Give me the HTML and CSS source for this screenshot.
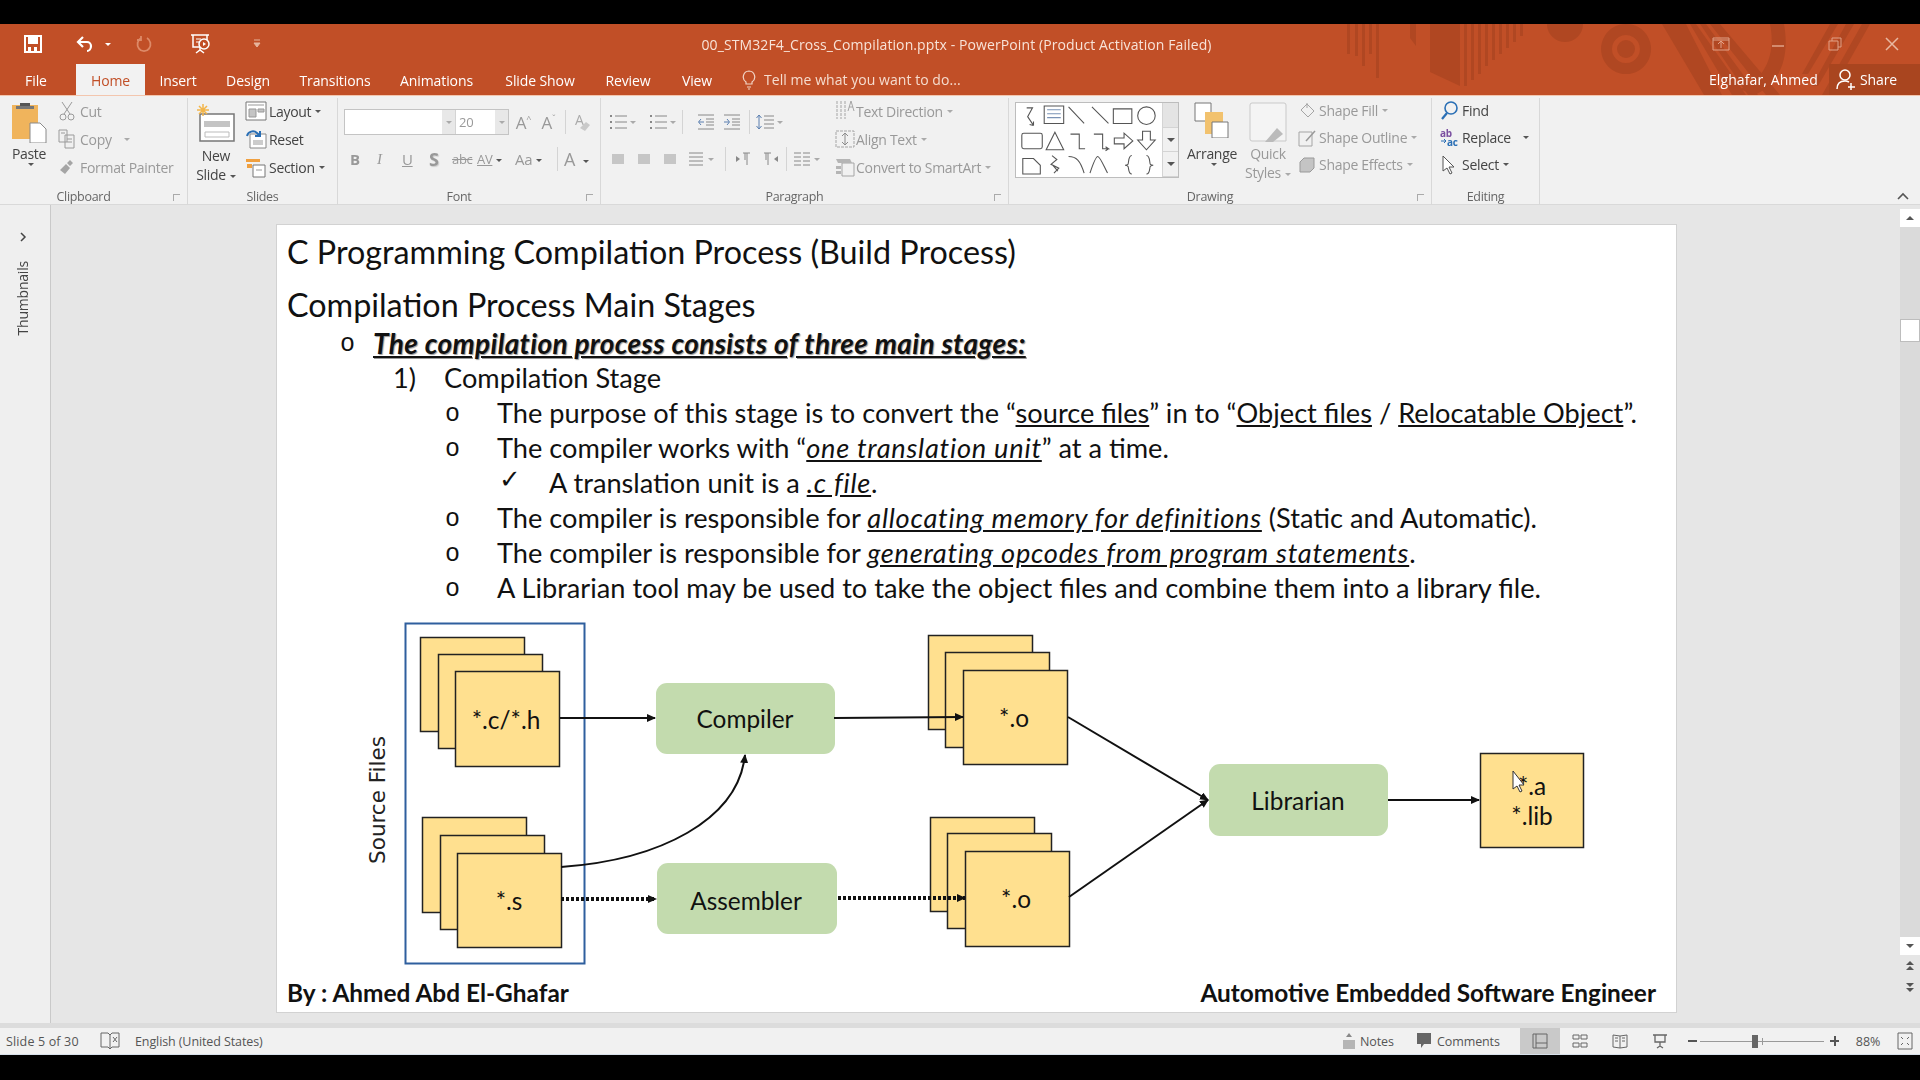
FILE: index.html
```html
<!DOCTYPE html>
<html lang="en">
<head>
    <meta charset="UTF-8">
    <title>00_STM32F4_Cross_Compilation.pptx - PowerPoint</title>
    <link rel="stylesheet" href="styles.css">
</head>
<body>
<svg class="defs" width="0" height="0">
    <symbol id="lines" viewBox="0 0 20 20"><path d="M3 4h14M3 8h14M3 12h14M3 16h14" fill="none" stroke="currentColor"/></symbol>
    <symbol id="bullets" viewBox="0 0 20 20"><path d="M7 4h12M7 10h12M7 16h12" fill="none" stroke="currentColor"/><path d="M2 3h2v2H2zM2 9h2v2H2zM2 15h2v2H2z" fill="currentColor"/></symbol>
    <symbol id="indent-l" viewBox="0 0 20 20"><path d="M2 3h16M10 7h8M10 10h8M10 13h8M2 17h16" fill="none" stroke="currentColor"/><path d="M8 10H3M5 7l-2.500 3L5 13" fill="none" stroke="#5a7fb0"/></symbol>
    <symbol id="indent-r" viewBox="0 0 20 20"><path d="M2 3h16M10 7h8M10 10h8M10 13h8M2 17h16" fill="none" stroke="currentColor"/><path d="M2 10h5M5 7l2.500 3L5 13" fill="none" stroke="#5a7fb0"/></symbol>
    <symbol id="spacing" viewBox="0 0 20 20"><path d="M9 4h10M9 8h10M9 12h10M9 16h10" fill="none" stroke="currentColor"/><path d="M4 3v14M1.500 6L4 3l2.500 3M1.500 14L4 17l2.500-3" fill="none" stroke="#5a7fb0"/></symbol>
    <symbol id="block" viewBox="0 0 20 20"><path d="M4 5h12v10H4z" fill="currentColor" opacity=".4"/></symbol>
    <symbol id="rtl" viewBox="0 0 20 20"><path d="M9 4h7M13 4v12M11 4v7" fill="none" stroke="currentColor"/><path d="M2 7l4 3-4 3z" fill="currentColor"/></symbol>
    <symbol id="ltr" viewBox="0 0 20 20"><path d="M4 4h7M8 4v12M6 4v7" fill="none" stroke="currentColor"/><path d="M18 7l-4 3 4 3z" fill="currentColor"/></symbol>
    <symbol id="cols" viewBox="0 0 20 20"><path d="M2 4h7M11 4h7M2 8h7M11 8h7M2 12h7M11 12h7M2 16h7M11 16h7" fill="none" stroke="currentColor"/></symbol>
</svg>

<div class="black-bar"></div>

<header class="titlebar">
    <svg class="title-art" width="580" height="71" viewBox="1340 24 580 71">
        <g fill="#b04722">
            <path d="M1347 24h3v30h-3zM1355 24h3v32h-3zM1362 24h3v42h-3zM1369 24h3v30h-3zM1376 24h3v54h-3z"/>
            <path d="M1410 24h6v22l-6-8zM1430 24h30v62l-30-14zM1464 24h3v62h-3zM1471 24h3v56h-3zM1478 24h3v50h-3zM1485 24h3v42h-3zM1492 24h3v36h-3zM1499 24h3v30h-3zM1506 24h3v24h-3zM1513 24h3v18h-3zM1520 24h3v12h-3z"/>
            <circle cx="1565" cy="24" r="18"/>
            <path fill-rule="evenodd" d="M1626 24a25 25 0 1 0 .1 0zM1626 35a14 14 0 1 1-.1 0z"/>
            <circle cx="1626" cy="49" r="9"/>
            <path d="M1662 24h24l36 71h-18zM1690 24h6l50 71h-14zM1700 24h6l52 71h-10zM1710 24h10l60 71h-14z"/>
            <path d="M1770 24h14c6 34-4 60-30 71l-14-6c26-10 36-36 30-65zM1830 24h8l-30 50h-6zM1846 24h8l-36 62h-6zM1862 24h8l-40 71h-8z"/>
        </g>
    </svg>
    <div class="title-row">
        <div class="qat">
            <svg width="20" height="20" viewBox="0 0 20 20"><path d="M2 2h16v16H2z" fill="none" stroke="#fff" stroke-width="2"/><path d="M5 3h10v7H5zM5 13h3v4H5zM11 13h3v4h-3z" fill="#fff"/></svg>
            <svg width="20" height="20" viewBox="0 0 20 20"><path d="M8 3L3 8l5 5M3 8h9a4 4 0 0 1 4 4c0 3-2 5-4 5" fill="none" stroke="#fff" stroke-width="2.200"/></svg>
            <span class="caret caret-white"></span>
            <svg width="18" height="20" viewBox="0 0 18 20"><path d="M12 4a6.500 7 0 1 1-6 0M6 2v4H2" fill="none" stroke="#dd8a68" stroke-width="1.800"/></svg>
            <svg width="24" height="24" viewBox="0 0 24 24"><path d="M2 3h18M4 3v12h14V3M11 15v4M7 21l4-3 4 3" fill="none" stroke="#fff" stroke-width="1.500"/><circle cx="15" cy="12" r="5" fill="#c14f27" stroke="#fff" stroke-width="1.500"/><path d="M14 10l3 2-3 2z" fill="#fff"/><path d="M7 7h5M7 10h4" stroke="#fff"/></svg>
            <svg width="8" height="12" viewBox="0 0 8 12"><path d="M1 2h6M1 5h6l-3 4z" fill="#e6b49c" stroke="#e6b49c"/></svg>
        </div>
        <div class="doc-title">00_STM32F4_Cross_Compilation.pptx - PowerPoint (Product Activation Failed)</div>
        <div class="win-btns">
            <svg width="18" height="14" viewBox="0 0 18 14"><path d="M1 1h16v12H1zM9 11V5M6 7l3-3 3 3M1 3h16" fill="none" stroke="#e0a288"/></svg>
            <svg width="14" height="14" viewBox="0 0 14 14"><path d="M1 9h12" stroke="#e0a288" stroke-width="1.500"/></svg>
            <svg width="14" height="14" viewBox="0 0 14 14"><path d="M1 4h9v9H1zM4 4V1h9v9h-3" fill="none" stroke="#e0a288"/></svg>
            <svg width="14" height="14" viewBox="0 0 14 14"><path d="M1 1l12 12M13 1L1 13" stroke="#e8b8a2" stroke-width="1.500"/></svg>
        </div>
    </div>
    <nav class="tab-row">
        <div class="tabs">
            <span class="tab tab-file">File</span>
            <span class="tab tab-active">Home</span>
            <span class="tab">Insert</span>
            <span class="tab">Design</span>
            <span class="tab">Transitions</span>
            <span class="tab">Animations</span>
            <span class="tab">Slide Show</span>
            <span class="tab">Review</span>
            <span class="tab">View</span>
        </div>
        <div class="tell-me">
            <svg width="14" height="20" viewBox="0 0 14 20"><path d="M7 1a6 6 0 0 0-3 11v2h6v-2A6 6 0 0 0 7 1zM5 17h4M6 19h2" fill="none" stroke="#f2d5c6" stroke-width="1.200"/></svg>
            <span>Tell me what you want to do...</span>
        </div>
        <div class="account">Elghafar, Ahmed</div>
        <div class="share">
            <svg width="20" height="24" viewBox="0 0 20 24"><circle cx="9" cy="7" r="5" fill="none" stroke="#fff" stroke-width="1.500"/><path d="M1 21c0-5 3-8 8-8 2 0 3 .5 4 1M15 15v7M12 19h7" fill="none" stroke="#fff" stroke-width="1.500"/></svg>
            <span>Share</span>
        </div>
    </nav>
</header>

<section class="ribbon">
    <div class="group g-clipboard">
        <div class="group-body">
            <div class="big-btn paste">
                <svg width="36" height="42" viewBox="0 0 36 42"><path d="M1 4h26v34H1z" fill="#f0b45c"/><path d="M9 2h10v5H9z" fill="#555"/><path d="M5 5h18v3H5z" fill="#777"/><path d="M19 22h10l6 6v14H19z" fill="#fff" stroke="#8a8a8a"/></svg>
                <span>Paste</span>
                <span class="caret"></span>
            </div>
            <div class="cmd-col off">
                <div class="cmd"><svg class="ico" width="16" height="20" viewBox="0 0 16 20"><path d="M3 1l8 12M13 1L5 13" fill="none" stroke="#9a9a9a"/><circle cx="4" cy="16" r="3" fill="none" stroke="#9a9a9a"/><circle cx="12" cy="16" r="3" fill="none" stroke="#9a9a9a"/></svg><span>Cut</span></div>
                <div class="cmd"><svg class="ico" width="18" height="20" viewBox="0 0 18 20"><path d="M1 1h8v12H1zM7 6h9v13H7z" fill="#f0f0f0" stroke="#9a9a9a"/><path d="M3 4h4M9 10h5M9 13h5" stroke="#9a9a9a"/></svg><span>Copy</span><span class="caret caret-wide"></span></div>
                <div class="cmd"><svg class="ico" width="16" height="18" viewBox="0 0 16 18"><path d="M1 12l6-6 4 4-5 6zM8 5l3-3 3 3-3 3z" fill="#a5a5a5"/></svg><span>Format Painter</span></div>
            </div>
        </div>
        <div class="group-label">Clipboard</div>
        <i class="launcher"></i>
    </div>

    <div class="group g-slides">
        <div class="group-body">
            <div class="big-btn new-slide">
                <svg width="38" height="42" viewBox="0 0 38 42"><path d="M3 11h34v27H3z" fill="#fff" stroke="#777" stroke-width="1.500"/><path d="M7 18h26v6H7z" fill="#c4c4c4"/><path d="M8 29h24v5H8z" fill="none" stroke="#bbb"/><path d="M6 1v12M0 7h12M2 3l8 8M10 3l-8 8" stroke="#f2b54a" stroke-width="1.500"/></svg>
                <span>New</span>
                <span>Slide<i class="caret"></i></span>
            </div>
            <div class="cmd-col">
                <div class="cmd"><svg class="ico" width="22" height="20" viewBox="0 0 22 20"><path d="M1 1h20v18H1z" fill="#fff" stroke="#777"/><path d="M3 4h16M4 8h7v8H4zM13 8h6v3h-6z" fill="#c4c4c4" stroke="#999"/></svg><span>Layout</span><span class="caret"></span></div>
                <div class="cmd"><svg class="ico" width="22" height="20" viewBox="0 0 22 20"><path d="M5 5h16v14H5z" fill="#fff" stroke="#888"/><path d="M8 11h10v5H8z" fill="#ccc"/><path d="M2 7a6 6 0 0 1 10-3l3 3M15 2v5h-5" fill="none" stroke="#2a6fb5" stroke-width="2"/></svg><span>Reset</span></div>
                <div class="cmd"><svg class="ico" width="22" height="22" viewBox="0 0 22 22"><path d="M1 3h14v3H1z" fill="#f0a040"/><path d="M8 9h12v12H8z" fill="#fff" stroke="#777"/><path d="M2 8h5v4H2z" fill="#f0a040"/><path d="M11 14h6" stroke="#999"/></svg><span>Section</span><span class="caret"></span></div>
            </div>
        </div>
        <div class="group-label">Slides</div>
    </div>

    <div class="group g-font">
        <div class="group-body body-rows">
            <div class="font-row">
                <div class="font-box">
                    <div class="font-name"><i class="spin"></i></div>
                    <div class="font-size"><span>20</span><i class="spin"></i></div>
                </div>
                <span class="glyph grow">A<sup>^</sup></span>
                <span class="glyph grow">A<sup>ˇ</sup></span>
                <i class="vsep"></i>
                <svg width="20" height="20" viewBox="0 0 20 20"><text x="3" y="13" class="svg-a">A</text><path d="M8 16l6-6 4 3-5 6z" fill="#c9c9c9"/></svg>
            </div>
            <div class="font-row font-row2">
                <b class="fg f-b">B</b><em class="fg f-i">I</em><u class="fg f-u">U</u><b class="fg f-s">S</b><s class="fg f-abc">abc</s>
                <span class="fg f-av">AV<i class="caret"></i></span><span class="fg f-aa">Aa<i class="caret"></i></span><i class="vsep"></i>
                <span class="fg f-color">A<i class="caret"></i></span>
            </div>
        </div>
        <div class="group-label">Font</div>
        <i class="launcher"></i>
    </div>

    <div class="group g-para">
        <div class="group-body">
            <div class="para-left">
                <div class="para-row">
                    <svg class="p20" width="20" height="20"><use href="#bullets"/></svg><i class="caret"></i>
                    <svg class="p20 gap1" width="20" height="20"><use href="#bullets"/></svg><i class="caret"></i>
                    <i class="vsep sep-indent"></i>
                    <svg class="p20" width="20" height="20"><use href="#indent-l"/></svg>
                    <svg class="p20" width="20" height="20"><use href="#indent-r"/></svg>
                    <i class="vsep sep-wide"></i>
                    <svg class="p20" width="20" height="20"><use href="#spacing"/></svg><i class="caret"></i>
                </div>
                <div class="para-row row2">
                    <svg class="p20" width="20" height="20"><use href="#block"/></svg>
                    <svg class="p20" width="20" height="20"><use href="#block"/></svg>
                    <svg class="p20" width="20" height="20"><use href="#block"/></svg>
                    <svg class="p20" width="20" height="20"><use href="#lines"/></svg><i class="caret"></i>
                    <i class="vsep sep-wider"></i>
                    <svg class="p20" width="20" height="20"><use href="#rtl"/></svg>
                    <svg class="p20" width="20" height="20"><use href="#ltr"/></svg>
                    <i class="vsep sep-cols"></i>
                    <svg class="p20" width="20" height="20"><use href="#cols"/></svg><i class="caret"></i>
                </div>
            </div>
            <div class="cmd-col off para-cmds">
                <div class="cmd"><svg class="ico" width="20" height="24" viewBox="0 0 20 24"><path d="M2 2v18M6 2v18M10 2v18" stroke="#a5a5a5" stroke-dasharray="3 1"/><path d="M13 12l3-10 3 10M14 8h4" fill="none" stroke="#a5a5a5"/></svg><span>Text Direction</span><span class="caret"></span></div>
                <div class="cmd"><svg class="ico" width="20" height="22" viewBox="0 0 20 22"><path d="M1 3h18v16H1z" fill="none" stroke="#a5a5a5" stroke-dasharray="3 1"/><path d="M10 5v12M7 8l3-3 3 3M7 14l3 3 3-3" fill="none" stroke="#8b8b8b"/></svg><span>Align Text</span><span class="caret"></span></div>
                <div class="cmd"><svg class="ico" width="20" height="20" viewBox="0 0 20 20"><path d="M7 6h12v13H7z" fill="none" stroke="#a5a5a5"/><path d="M1 2h14l2 4H3zM1 9h5v3H1zM1 14h5v3H1z" fill="#b5b5b5"/></svg><span>Convert to SmartArt</span><span class="caret"></span></div>
            </div>
        </div>
        <div class="group-label">Paragraph</div>
        <i class="launcher"></i>
    </div>

    <div class="group g-draw">
        <div class="group-body">
            <div class="shapes">
                <svg class="shape-grid" width="146" height="74" viewBox="0 0 146 76">
                    <g fill="none" stroke="#555" stroke-width="1.100">
                        <path d="M9 5h6l-5 9 6 9M16 23l-4-1M16 23v-4"/>
                        <path d="M27 3h20v18H27z"/><path d="M30 7h14M30 11h14M30 15h14" stroke="#7a92b5"/>
                        <path d="M52 4l16 17M76 4l17 17"/>
                        <path d="M98 6h19v15H98z"/><circle cx="132" cy="13" r="9"/>
                        <path d="M6 31h17a2 2 0 0 1 2 2v12a2 2 0 0 1-2 2H6a2 2 0 0 1-2-2V33a2 2 0 0 1 2-2z"/>
                        <path d="M38 30l9 18H29zM54 32h9v15h6M78 32h9v15h6l-3-2M93 47l-3 2"/>
                        <path d="M99 36h10v-5l9 8-9 8v-5H99z"/>
                        <path d="M128 29h8v9h5l-9 10-9-10h5z"/>
                        <path d="M5 57h11l7 7v9H5z"/>
                        <path d="M35 54l5 4-6 5 8 4-5 5M36 64l5 6"/>
                        <path d="M52 55c8 0 12 4 16 17M74 72c4-12 6-17 8-17s4 5 10 17"/>
                        <path d="M113 54c-4 0-3 8-4 9-1 1-3 1-3 1 0 0 2 0 3 1 1 1 0 8 4 8M128 54c4 0 3 8 4 9 1 1 3 1 3 1 0 0-2 0-3 1-1 1 0 8-4 8" transform="translate(4 0)"/>
                    </g>
                </svg>
                <div class="shape-scroll">
                    <span class="scroll-up"></span>
                    <span class="scroll-mid"><i class="tri-down"></i></span>
                    <span class="scroll-more"><i class="tri-down"></i></span>
                </div>
            </div>
            <div class="big-btn arrange">
                <svg width="36" height="36" viewBox="0 0 36 36"><path d="M1 1h16v18H1z" fill="#fff" stroke="#777"/><path d="M11 10h18v22H11z" fill="#f2c26e"/><path d="M18 20h16v16H18z" fill="#fff" stroke="#777"/></svg>
                <span>Arrange</span>
                <span class="caret"></span>
            </div>
            <div class="big-btn quick off">
                <svg width="38" height="42" viewBox="0 0 38 42"><path d="M3 1h32a2 2 0 0 1 2 2v36H3a2 2 0 0 1-2-2V3a2 2 0 0 1 2-2z" fill="#f4f4f4" stroke="#c9c9c9"/><path d="M16 40l12-14 6 6-10 8z" fill="#bbb"/></svg>
                <span>Quick</span>
                <span>Styles<i class="caret"></i></span>
            </div>
            <div class="cmd-col off tight">
                <div class="cmd"><svg class="ico" width="18" height="18" viewBox="0 0 18 18"><path d="M9 2l7 7-6 6-7-7zM9 1v5" fill="none" stroke="#a5a5a5"/></svg><span>Shape Fill</span><span class="caret"></span></div>
                <div class="cmd"><svg class="ico" width="18" height="18" viewBox="0 0 18 18"><path d="M1 3h13v14H1z" fill="none" stroke="#a5a5a5"/><path d="M8 12l9-10" stroke="#999" stroke-width="1.500"/></svg><span>Shape Outline</span><span class="caret"></span></div>
                <div class="cmd"><svg class="ico" width="18" height="18" viewBox="0 0 18 18"><path d="M2 6l4-4h10v10l-4 4H2z" fill="#c4c4c4" stroke="#999"/></svg><span>Shape Effects</span><span class="caret"></span></div>
            </div>
        </div>
        <div class="group-label">Drawing</div>
        <i class="launcher"></i>
    </div>

    <div class="group g-edit">
        <div class="group-body">
            <div class="cmd-col tight">
                <div class="cmd"><svg class="ico" width="18" height="20" viewBox="0 0 18 20"><circle cx="11" cy="7" r="6" fill="none" stroke="#2a6fb5" stroke-width="1.600"/><path d="M7 12l-5 6" stroke="#2a6fb5" stroke-width="2.200"/></svg><span>Find</span></div>
                <div class="cmd"><svg class="ico" width="20" height="20" viewBox="0 0 20 20"><text x="1" y="9" class="svg-ab">ab</text><text x="8" y="18" class="svg-ac">ac</text><path d="M2 13h5M5 11l2 2-2 2" fill="none" stroke="#2a6fb5"/></svg><span>Replace</span><span class="caret caret-wide"></span></div>
                <div class="cmd"><svg class="ico" width="16" height="22" viewBox="0 0 16 22"><path d="M2 2v15l4-3 3 6 2-1-3-6h5z" fill="#fff" stroke="#555"/></svg><span>Select</span><span class="caret"></span></div>
            </div>
        </div>
        <div class="group-label">Editing</div>
    </div>

    <svg class="collapse" width="14" height="8" viewBox="0 0 14 8"><path d="M2 7l5-5 5 5" fill="none" stroke="#555" stroke-width="1.600"/></svg>
</section>

<main class="workspace">
    <aside class="thumbs">
        <svg width="8" height="10" viewBox="0 0 8 10"><path d="M2 1l4 4-4 4" fill="none" stroke="#444" stroke-width="1.500"/></svg>
        <span class="thumbs-label">Thumbnails</span>
    </aside>

    <div class="canvas">
        <article class="slide">
            <div class="slide-text">
                <h1 class="slide-title">C Programming Compilation Process (Build Process)</h1>
                <h2 class="slide-sub">Compilation Process Main Stages</h2>
                <div class="line lv1"><span class="mark">o</span><span class="lead">The compilation process consists of three main stages:</span></div>
                <div class="line lv2"><span class="mark num">1)</span><span>Compilation Stage</span></div>
                <div class="line lv3"><span class="mark">o</span><span>The purpose of this stage is to convert the “<u>source files</u>” in to “<u>Object files</u> / <u>Relocatable Object</u>”.</span></div>
                <div class="line lv3"><span class="mark">o</span><span>The compiler works with “<em class="key">one translation unit</em>” at a time.</span></div>
                <div class="line lv4"><span class="mark check">✓</span><span>A translation unit is a <em class="key">.c file</em>.</span></div>
                <div class="line lv3"><span class="mark">o</span><span>The compiler is responsible for <em class="key">allocating memory for definitions</em> (Static and Automatic).</span></div>
                <div class="line lv3"><span class="mark">o</span><span>The compiler is responsible for <em class="key">generating opcodes from program statements</em>.</span></div>
                <div class="line lv3"><span class="mark">o</span><span>A Librarian tool may be used to take the object files and combine them into a library file.</span></div>
            </div>

            <svg class="diagram" width="1400" height="366" viewBox="277 605 1400 366">
                <defs>
                    <marker id="head" markerWidth="9" markerHeight="9" refX="8" refY="4" orient="auto" markerUnits="userSpaceOnUse"><path d="M0 0l9 4-9 4z" fill="#111"/></marker>
                </defs>
                <rect class="frame" x="405.500" y="623.500" width="179" height="340"/>
                <text class="node-label source" transform="translate(385 800) rotate(-90)">Source Files</text>

                <g class="files">
                    <rect x="420.500" y="637.500" width="104" height="94"/>
                    <rect x="438.500" y="654.500" width="104" height="94"/>
                    <rect x="455.500" y="671.500" width="104" height="95"/>
                    <rect x="422.500" y="817.500" width="104" height="95"/>
                    <rect x="440.500" y="835.500" width="104" height="94"/>
                    <rect x="457.500" y="853.500" width="104" height="94"/>
                    <rect x="928.500" y="635.500" width="104" height="94"/>
                    <rect x="945.500" y="652.500" width="104" height="95"/>
                    <rect x="963.500" y="670.500" width="104" height="94"/>
                    <rect x="930.500" y="817.500" width="104" height="94"/>
                    <rect x="947.500" y="833.500" width="104" height="95"/>
                    <rect x="965.500" y="851.500" width="104" height="95"/>
                    <rect x="1480.500" y="753.500" width="103" height="94"/>
                </g>
                <g class="tools">
                    <rect x="656" y="683" width="179" height="71" rx="11"/>
                    <rect x="657" y="863" width="180" height="71" rx="11"/>
                    <rect x="1209" y="764" width="179" height="72" rx="11"/>
                </g>

                <g class="arrows">
                    <path d="M560 718H655" marker-end="url(#head)"/>
                    <path d="M834 718L963 717" marker-end="url(#head)"/>
                    <path d="M561 867C660 860 738 820 745 755" marker-end="url(#head)"/>
                    <path d="M1068 717L1208 800" marker-end="url(#head)"/>
                    <path d="M1069 897L1208 800" marker-end="url(#head)"/>
                    <path d="M1388 800H1479" marker-end="url(#head)"/>
                    <path class="dotted" d="M561 899H656" marker-end="url(#head)"/>
                    <path class="dotted" d="M838 898H965" marker-end="url(#head)"/>
                </g>

                <g class="node-label">
                    <text x="506" y="729">*.c/*.h</text>
                    <text x="509" y="910">*.s</text>
                    <text x="1014" y="727">*.o</text>
                    <text x="1016" y="908">*.o</text>
                    <text x="745" y="728">Compiler</text>
                    <text x="746" y="910">Assembler</text>
                    <text x="1298" y="810">Librarian</text>
                    <text x="1532" y="795">*.a</text>
                    <text x="1532" y="825">*.lib</text>
                </g>
                <path class="cursor" d="M1513 771v18l4-3 3 6 2-1-3-6h5z"/>
            </svg>

            <footer class="slide-foot">
                <span>By : Ahmed Abd El-Ghafar</span>
                <span>Automotive Embedded Software Engineer</span>
            </footer>
        </article>
    </div>

    <div class="vscroll">
        <span class="vbtn"><i class="tri-up"></i></span>
        <span class="vtrack"><i class="vthumb"></i></span>
        <span class="vbtn"><i class="tri-down"></i></span>
        <span class="vpage"><i class="tri-up"></i><i class="tri-up"></i></span>
        <span class="vpage"><i class="tri-down"></i><i class="tri-down"></i></span>
    </div>
</main>

<footer class="statusbar">
    <span class="st-slide">Slide 5 of 30</span>
    <svg class="st-spell" width="20" height="18" viewBox="0 0 20 18"><path d="M10 3L8 1H1v14h7l2 2 2-2h7V1h-7zM10 3v14" fill="none" stroke="#666"/><path d="M13 5l4 5M17 5l-4 5" stroke="#666"/></svg>
    <span class="st-lang">English (United States)</span>
    <span class="st-notes">
        <svg width="14" height="18" viewBox="0 0 14 18"><path d="M1 8h12v9H1z" fill="#b5b5b5"/><path d="M4 5l3-4 3 4z" fill="#888"/></svg>Notes
    </span>
    <span class="st-comments">
        <svg width="16" height="18" viewBox="0 0 16 18"><path d="M1 1h14v11H8l-3 4v-4H1z" fill="#666"/></svg>Comments
    </span>
    <span class="view-btn view-on"><svg width="16" height="16" viewBox="0 0 16 16"><path d="M1 1h14v14H1zM4 1v14M4 10h11" fill="none" stroke="#666"/></svg></span>
    <span class="view-btn"><svg width="16" height="16" viewBox="0 0 16 16"><path d="M1 2h6v4H1zM9 2h6v4H9zM1 10h6v4H1zM9 10h6v4H9z" fill="none" stroke="#666"/></svg></span>
    <span class="view-btn"><svg width="16" height="16" viewBox="0 0 16 16"><path d="M1 2l7 1 7-1v12l-7 1-7-1zM8 3v12M3 5h3M3 8h3M10 5h3M10 8h3" fill="none" stroke="#666"/></svg></span>
    <span class="view-btn"><svg width="16" height="16" viewBox="0 0 16 16"><path d="M1 2h14M3 2v7h10V2M8 9v4M5 15l3-2 3 2" fill="none" stroke="#666" stroke-width="1.300"/></svg></span>
    <span class="zoom-minus"></span>
    <span class="zoom-track"><i class="zoom-tick"></i><i class="zoom-thumb"></i></span>
    <span class="zoom-plus"></span>
    <span class="zoom-pct">88%</span>
    <svg class="st-fit" width="16" height="18" viewBox="0 0 16 18"><path d="M1 1h14v16H1zM4 5l2 2M12 5l-2 2M4 13l2-2M12 13l-2-2" fill="none" stroke="#666"/></svg>
</footer>
<div class="black-bar bottom"></div>
</body>
</html>
```

FILE: styles.css
```css
* {
    box-sizing: border-box;
}
html, body {
    margin: 0;
    padding: 0;
}
body {
    width: 1920px;
    height: 1080px;
    overflow: hidden;
    background-color: #000;
    font-family: "Open Sans", sans-serif;
    font-size: 13px;
    color: #444;
    filter: blur(0.45px);
}
.defs {
    position: absolute;
}
i {
    font-style: normal;
}
.black-bar {
    height: 24px;
    background-color: #000;
}
.black-bar.bottom {
    height: 25px;
}

/* title bar */
.titlebar {
    position: relative;
    height: 71px;
    background-color: #c14f27;
    color: #fff;
}
.title-art {
    position: absolute;
    left: 1340px;
    top: 0;
}
.title-row {
    position: relative;
    display: grid;
    grid-template-columns: 1fr 520px 1fr;
    align-items: center;
    height: 40px;
}
.qat {
    display: grid;
    grid-template-columns: 66px 38px 10px 60px 54px 58px;
    justify-items: center;
    align-items: center;
}
.doc-title {
    margin-left: -7px;
    font-size: 14px;
    letter-spacing: 0.1px;
    white-space: nowrap;
    text-align: center;
    color: #f8e3d8;
}
.win-btns {
    display: grid;
    grid-template-columns: repeat(4, 57px);
    justify-items: center;
    justify-content: end;
    align-items: center;
}
.tab-row {
    position: relative;
    display: flex;
    align-items: stretch;
    height: 31px;
}
.tabs {
    display: grid;
    grid-template-columns: 76px 69px 66px 74px 100px 103px 104px 72px 66px;
    width: 730px;
}
.tab {
    display: flex;
    align-items: center;
    justify-content: center;
    font-size: 14px;
    letter-spacing: -0.1px;
    color: #fff;
}
.tab-file {
    padding-right: 4px;
}
.tab-active {
    height: 32px;
    background-color: #f2f2f2;
    color: #c14f27;
}
.tell-me {
    display: flex;
    align-items: center;
    gap: 8px;
    margin-left: 12px;
    font-size: 14px;
    letter-spacing: 0.05px;
    color: #f5dccf;
}
.account {
    display: flex;
    align-items: center;
    margin-left: auto;
    margin-right: 11px;
    font-size: 14px;
    letter-spacing: 0.1px;
}
.share {
    display: flex;
    align-items: center;
    gap: 4px;
    width: 91px;
    padding-left: 7px;
    font-size: 14px;
    letter-spacing: -0.1px;
    background-color: #a9451f;
}

/* ribbon */
.ribbon {
    position: relative;
    display: flex;
    height: 110px;
    background-color: #f1f1f1;
    border-top: 1px solid #f3c6ae;
    border-bottom: 1px solid #d9d9d9;
    font-size: 13px;
    letter-spacing: -0.3px;
}
.group {
    position: relative;
    display: flex;
    flex-direction: column;
    height: 107px;
    margin-top: 2px;
    border-right: 1px solid #d8d8d8;
}
.g-clipboard { width: 188px; }
.g-slides { width: 150px; }
.g-font { width: 263px; }
.g-para { width: 408px; }
.g-draw { width: 423px; }
.g-edit { width: 108px; }
.group-body {
    display: flex;
    flex: 1;
}
.group-label {
    height: 17px;
    line-height: 17px;
    text-align: center;
    font-size: 12.500px;
    color: #666;
}
.g-clipboard .group-label,
.g-font .group-label,
.g-para .group-label,
.g-draw .group-label {
    padding-right: 20px;
}
.launcher {
    position: absolute;
    right: 7px;
    bottom: 4px;
    width: 7px;
    height: 7px;
    border-left: 1px solid #aaa;
    border-top: 1px solid #aaa;
}
.caret {
    display: inline-block;
    width: 0;
    height: 0;
    margin-left: 4px;
    border-left: 3px solid transparent;
    border-right: 3px solid transparent;
    border-top: 3px solid #555;
    vertical-align: middle;
}
.caret-white {
    border-top-color: #fff;
    margin-left: 0;
    margin-right: 3px;
}
.caret-wide {
    margin-left: 12px;
}
.off .caret {
    border-top-color: #aaa;
}
.big-btn {
    display: flex;
    flex-direction: column;
    align-items: center;
    line-height: 19px;
    font-size: 14px;
    color: #444;
}
.big-btn svg {
    margin-bottom: 9px;
}
.big-btn.off {
    color: #999;
}
.cmd-col {
    display: flex;
    flex-direction: column;
    margin-top: -1px;
}
.cmd {
    display: flex;
    align-items: center;
    height: 28px;
    white-space: nowrap;
    font-size: 14px;
    color: #444;
}
.cmd-col.off .cmd {
    color: #999;
}
.cmd-col.tight .cmd {
    height: 27px;
}
.ico {
    flex: none;
}
.paste {
    width: 58px;
    padding-top: 3px;
}
.paste svg {
    margin-bottom: 1px;
}
.g-clipboard .ico {
    margin-right: 4px;
    width: 18px;
}
.new-slide {
    width: 56px;
    padding-top: 5px;
}
.new-slide svg {
    margin-bottom: 1px;
}
.g-slides .ico {
    margin-right: 2px;
}
.g-slides .cmd-col {
    padding-left: 1px;
}

/* font group */
.body-rows {
    flex-direction: column;
    padding: 11px 0 0 6px;
}
.font-row {
    display: flex;
    align-items: center;
    height: 26px;
}
.font-box {
    display: flex;
    width: 165px;
    height: 26px;
    border: 1px solid #c4c4c4;
    background-color: #fff;
}
.font-name {
    position: relative;
    width: 111px;
    border-right: 1px solid #d4d4d4;
}
.font-size {
    position: relative;
    padding-left: 3px;
    line-height: 24px;
    color: #999;
    flex: 1;
}
.spin {
    position: absolute;
    right: 0;
    top: 0;
    width: 13px;
    height: 24px;
    background-color: #e8e8e8;
}
.spin::after {
    content: "";
    position: absolute;
    left: 4px;
    top: 11px;
    border-left: 3px solid transparent;
    border-right: 3px solid transparent;
    border-top: 3px solid #aaa;
}
.glyph {
    width: 25px;
    text-align: center;
    font-size: 17px;
    color: #999;
}
.glyph sup {
    font-size: 9px;
    line-height: 0;
}
.grow:first-of-type {
    margin-left: 2px;
}
.vsep {
    display: inline-block;
    width: 1px;
    height: 24px;
    margin: 0 6px 0 4px;
    background-color: #d4d4d4;
}
.svg-a {
    font: 14px "Open Sans", sans-serif;
    fill: #aaa;
}
.font-row2 {
    height: 26px;
    margin-top: 11px;
    color: #999;
}
.fg {
    display: inline-block;
    font-size: 15px;
    font-style: normal;
    white-space: nowrap;
}
.f-b { margin-left: 6px; width: 27px; }
.f-i { width: 25px; font-style: italic; font-family: "Liberation Serif", serif; }
.f-u { width: 27px; }
.f-s { width: 23px; font-size: 18px; text-shadow: 1px 1px 1px #ccc; }
.f-abc { width: 25px; font-size: 13px; }
.f-av { width: 38px; font-size: 13px; text-decoration: underline; }
.f-aa { width: 38px; }
.f-color { font-size: 18px; }
.f-color .caret { margin-left: 8px; }

/* paragraph group */
.para-left {
    width: 234px;
    padding: 14px 0 0 7px;
    color: #888;
}
.para-row {
    display: flex;
    align-items: center;
    height: 20px;
}
.row2 {
    margin-top: 17px;
}
.p20 {
    flex: none;
}
.para-row .caret {
    margin-left: 2px;
    margin-right: 3px;
    border-top-color: #aaa;
}
.para-row .gap1 {
    margin-left: 9px;
}
.para-row .sep-indent {
    margin: 0 13px 0 3px;
}
.para-row .sep-wide {
    margin: 0 5px 0 7px;
}
.para-row .sep-wider {
    margin: 0 8px 0 8px;
}
.para-row .sep-cols {
    margin: 0 5px 0 6px;
}
.para-row .p20 + .p20 {
    margin-left: 6px;
}
.para-cmds .ico {
    margin-right: 1px;
}

/* drawing group */
.shapes {
    display: flex;
    width: 164px;
    height: 76px;
    margin: 4px 0 0 6px;
    background-color: #fff;
    border: 1px solid #bdbdbd;
}
.shape-grid {
    flex: none;
}
.shape-scroll {
    display: flex;
    flex-direction: column;
    flex: 1;
    background-color: #f1f1f1;
    border-left: 1px solid #d4d4d4;
}
.shape-scroll span {
    display: flex;
    align-items: center;
    justify-content: center;
    flex: 1;
    border-bottom: 1px solid #d4d4d4;
}
.scroll-up {
    background-color: #e4e4e4;
}
.tri-up, .tri-down {
    display: inline-block;
    width: 0;
    height: 0;
    border-left: 4px solid transparent;
    border-right: 4px solid transparent;
}
.tri-up {
    border-bottom: 4px solid #555;
}
.tri-down {
    border-top: 4px solid #555;
}
.arrange {
    width: 66px;
    padding-top: 4px;
}
.arrange svg {
    margin-bottom: 6px;
}
.quick {
    width: 46px;
    padding-top: 4px;
}
.quick svg {
    margin-bottom: 0;
}
.g-draw .cmd-col {
    margin-left: 7px;
}
.g-draw .ico {
    margin-right: 3px;
}
.g-edit .cmd-col {
    padding-left: 7px;
}
.g-edit .ico {
    margin-right: 3px;
    width: 20px;
}
.svg-ab {
    font: bold 10px "Open Sans", sans-serif;
    fill: #7a4fa0;
}
.svg-ac {
    font: bold 10px "Open Sans", sans-serif;
    fill: #2a6fb5;
}
.collapse {
    position: absolute;
    right: 10px;
    bottom: 4px;
}

/* slide area */
.workspace {
    display: flex;
    height: 823px;
    background-color: #e6e6e6;
    border-bottom: 5px solid #dcdcdc;
}
.thumbs {
    display: flex;
    flex-direction: column;
    align-items: center;
    width: 51px;
    padding: 27px 5px 0 0;
    background-color: #efefef;
    border-right: 1px solid #c9c9c9;
}
.thumbs-label {
    margin-top: 19px;
    writing-mode: vertical-rl;
    transform: rotate(180deg);
    font-size: 14px;
    letter-spacing: -0.2px;
    color: #444;
}
.canvas {
    width: 1849px;
    padding: 19px 0 0 225px;
}
.slide {
    display: flex;
    flex-direction: column;
    width: 1401px;
    height: 789px;
    background-color: #fff;
    border: 1px solid #d2d2d2;
    color: #111;
    font-family: Lato, "Open Sans", sans-serif;
}
.slide-text {
    padding: 0 0 0 10px;
}
.slide-title,
.slide-sub {
    margin: 0;
    font-weight: 400;
    font-size: 32.300px;
    white-space: nowrap;
}
.slide-title {
    height: 60px;
    padding-top: 7px;
    line-height: 40px;
}
.slide-sub {
    height: 40px;
    line-height: 40px;
}
.line {
    display: flex;
    align-items: center;
    height: 35px;
    font-size: 27.200px;
    white-space: nowrap;
}
.lv1 { margin-left: 53px; }
.lv2 { margin-left: 106px; }
.lv3 { margin-left: 158px; }
.lv4 { margin-left: 212px; }
.mark {
    flex: none;
    margin-top: 3px;
    font-size: 25px;
    font-family: "Liberation Mono", monospace;
}
.lv1 .mark { width: 33px; }
.lv2 .mark { width: 51px; }
.lv3 .mark { width: 52px; }
.lv4 .mark { width: 50px; }
.mark.num {
    margin-top: 0;
    font-size: 27.200px;
    font-family: Lato, sans-serif;
}
.mark.check {
    margin-top: -8px;
    font-family: "DejaVu Sans", sans-serif;
    font-size: 26px;
}
.lead {
    font-weight: 700;
    font-style: italic;
    font-size: 28px;
    letter-spacing: 0.35px;
    text-decoration: underline;
    text-shadow: 1px 1px 1px #999;
}
.key {
    font-style: italic;
    letter-spacing: 0.75px;
    text-decoration: underline;
}
.diagram {
    display: block;
    flex: none;
}
.frame {
    fill: none;
    stroke: #2f5f9e;
    stroke-width: 2;
}
.files rect {
    fill: #ffe08f;
    stroke: #222;
    stroke-width: 1.500;
}
.tools rect {
    fill: #c3dbae;
}
.arrows path {
    fill: none;
    stroke: #111;
    stroke-width: 2;
}
.arrows .dotted {
    stroke-width: 4;
    stroke-dasharray: 3 2;
}
.node-label {
    font-family: Lato, sans-serif;
    font-size: 24.400px;
    text-anchor: middle;
    fill: #111;
}
.node-label.source {
    font-family: "DejaVu Sans", sans-serif;
    font-size: 21.500px;
    fill: #222;
}
.cursor {
    fill: #fff;
    stroke: #333;
}
.slide-foot {
    display: flex;
    justify-content: space-between;
    padding: 7px 20px 0 10px;
    font-size: 24.400px;
    font-weight: 700;
}
.vscroll {
    display: flex;
    flex-direction: column;
    align-items: center;
    width: 20px;
    padding-top: 4px;
}
.vbtn {
    display: flex;
    align-items: center;
    justify-content: center;
    flex: none;
    width: 20px;
    height: 18px;
    background-color: #fff;
}
.vtrack {
    display: block;
    position: relative;
    width: 20px;
    height: 710px;
    background-color: #dadada;
}
.vthumb {
    position: absolute;
    left: 0;
    top: 92px;
    width: 20px;
    height: 23px;
    background-color: #fff;
    border: 1px solid #bdbdbd;
}
.vpage {
    display: flex;
    flex-direction: column;
    align-items: center;
    gap: 1px;
    height: 22px;
    padding-top: 6px;
}

/* status bar */
.statusbar {
    display: flex;
    align-items: center;
    height: 27px;
    background-color: #f1f1f1;
    border-bottom: 1px solid #d7e0ea;
    font-size: 12.500px;
    letter-spacing: -0.1px;
    color: #555;
}
.st-slide {
    width: 100px;
    padding-left: 6px;
    letter-spacing: 0.15px;
}
.st-spell {
    width: 35px;
    padding-right: 15px;
}
.st-lang {
    width: 1207px;
}
.st-notes {
    display: flex;
    align-items: center;
    gap: 4px;
    width: 74px;
}
.st-comments {
    display: flex;
    align-items: center;
    gap: 5px;
    width: 104px;
}
.view-btn {
    display: flex;
    align-items: center;
    justify-content: center;
    width: 40px;
    height: 26px;
}
.view-on {
    background-color: #c9c9c9;
}
.zoom-minus,
.zoom-plus {
    position: relative;
    width: 12px;
    height: 12px;
}
.zoom-minus {
    margin-left: 7px;
}
.zoom-minus::before,
.zoom-plus::before {
    content: "";
    position: absolute;
    left: 1px;
    top: 5px;
    width: 9px;
    height: 2px;
    background-color: #555;
}
.zoom-plus::after {
    content: "";
    position: absolute;
    left: 4.500px;
    top: 1px;
    width: 2px;
    height: 10px;
    background-color: #555;
}
.zoom-track {
    position: relative;
    width: 124px;
    height: 1px;
    margin: 0 5px 0 1px;
    background-color: #999;
}
.zoom-thumb {
    position: absolute;
    left: 52px;
    top: -6px;
    width: 6px;
    height: 13px;
    background-color: #666;
}
.zoom-tick {
    position: absolute;
    left: 62px;
    top: -3px;
    width: 1px;
    height: 7px;
    background-color: #999;
}
.zoom-pct {
    width: 54px;
    text-align: center;
}
.st-fit {
    margin-left: 2px;
}
```
